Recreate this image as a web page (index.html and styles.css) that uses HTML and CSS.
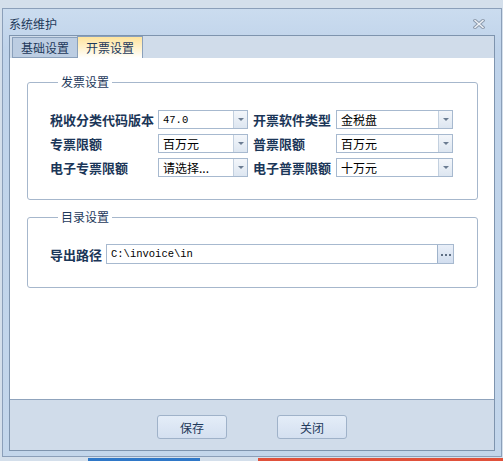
FILE: index.html
```html
<!DOCTYPE html>
<html lang="zh-CN">
<head>
  <meta charset="UTF-8" />
  <title>系统维护</title>
  <link rel="stylesheet" href="styles.css">
</head>
<body>
  <div class="window">
    <div class="titlebar">
      <span class="title">系统维护</span>
      <svg class="close" width="12" height="10" viewBox="0 0 12 10">
        <path d="M2 1.5 L10 8.5 M10 1.5 L2 8.5" stroke="#8d9bad" stroke-width="3.4" stroke-linecap="square" fill="none"/>
        <path d="M2 1.5 L10 8.5 M10 1.5 L2 8.5" stroke="#eef2f7" stroke-width="1.4" stroke-linecap="square" fill="none"/>
      </svg>
    </div>

    <div class="panel">
      <div class="tabs">
        <div class="tab">基础设置</div>
        <div class="tab active">开票设置</div>
      </div>

      <div class="content">
        <!-- 发票设置 -->
        <fieldset class="group">
          <legend>发票设置</legend>
          <div class="form-grid">
            <label>税收分类代码版本</label>
            <div class="combo mono"><span>47.0</span><i class="drop"></i></div>
            <label class="right">开票软件类型</label>
            <div class="combo"><span>金税盘</span><i class="drop"></i></div>

            <label>专票限额</label>
            <div class="combo"><span>百万元</span><i class="drop"></i></div>
            <label class="right">普票限额</label>
            <div class="combo"><span>百万元</span><i class="drop"></i></div>

            <label>电子专票限额</label>
            <div class="combo"><span>请选择...</span><i class="drop"></i></div>
            <label class="right">电子普票限额</label>
            <div class="combo"><span>十万元</span><i class="drop"></i></div>
          </div>
        </fieldset>

        <!-- 目录设置 -->
        <fieldset class="group dir">
          <legend>目录设置</legend>
          <div class="path-row">
            <label>导出路径</label>
            <div class="path-input mono">
              <span>C:\invoice\in</span>
              <i class="browse"><b></b><b></b><b></b></i>
            </div>
          </div>
        </fieldset>
      </div>

      <div class="footer">
        <button type="button">保存</button>
        <button type="button">关闭</button>
      </div>
    </div>
  </div>

  <div class="taskbar">
    <span class="bar blue"></span>
    <span class="bar red"></span>
  </div>
</body>
</html>
```

FILE: styles.css
```css
* {
  margin: 0;
  padding: 0;
  box-sizing: border-box;
  font-family: "Noto Sans CJK SC", "Noto Sans", sans-serif;
}

body {
  width: 503px;
  height: 461px;
  overflow: hidden;
  background: #d4dfeb;
  color: #1e395b;
  font-size: 12px;
}

.window {
  margin: 8px 0 0 2px;
  width: 500px;
  height: 449px;
  border: 1px solid #8b9fb9;
  background: linear-gradient(#cbdcef, #bfd3ea 40px, #c3d6eb);
}

.titlebar {
  height: 26px;
  display: flex;
  align-items: center;
  justify-content: space-between;
  padding: 2px 16px 0 6px;
}

.title {
  font-size: 12px;
  color: #1e395b;
}

.close {
  margin-top: 1px;
}

.panel {
  margin: 0 6px 5px 6px;
  height: 416px;
  border: 1px solid #7e94ae;
  background: #d0dcea;
  display: flex;
  flex-direction: column;
}

.tabs {
  height: 22px;
  display: flex;
  align-items: flex-end;
  padding-left: 2px;
}

.tab {
  width: 66px;
  height: 21px;
  border: 1px solid #8aa0bb;
  background: #bccde2;
  text-align: center;
  line-height: 19px;
  font-size: 12px;
  color: #1e395b;
}

.tab.active {
  height: 22px;
  margin-left: -1px;
  border-bottom: none;
  background: linear-gradient(#ffe49d, #fff3d2 12px, #fff);
  line-height: 21px;
}

.content {
  height: 342px;
  background: #fff;
  border-bottom: 1px solid #8fa3bc;
  padding: 0 16px 0 17px;
}

.group {
  border: 1px solid #a6b7cc;
  border-radius: 3px;
  margin-top: 17px;
  padding: 21px 0 22px 22px;
}

.group legend {
  margin-left: 8px;
  padding: 0 3px;
  font-size: 12px;
  line-height: 14px;
  color: #1e395b;
}

.group.dir {
  margin-top: 10px;
  padding: 20px 0 23px 22px;
}

.form-grid {
  display: grid;
  grid-template-columns: 108px 90px 88px 117px;
  grid-auto-rows: 19px;
  row-gap: 5px;
}

label {
  font-size: 13px;
  font-weight: bold;
  color: #1b3658;
  display: flex;
  align-items: center;
  white-space: nowrap;
}

label.right {
  padding-left: 5px;
}

.combo,
.path-input {
  border: 1px solid #a7b9cf;
  background: #fff;
  display: flex;
  align-items: center;
  color: #000;
  font-size: 12px;
}

.combo span,
.path-input span {
  flex: 1;
  padding-left: 4px;
  white-space: nowrap;
  overflow: hidden;
}

.mono span {
  font-family: "Liberation Mono", monospace;
  font-size: 10.5px;
}

.drop {
  width: 14px;
  height: 100%;
  border-left: 1px solid #c3d0df;
  background: linear-gradient(#f3f6fa, #dde6f1);
  position: relative;
}

.drop::after {
  content: "";
  position: absolute;
  left: 4px;
  top: 7px;
  border-left: 3px solid transparent;
  border-right: 3px solid transparent;
  border-top: 3px solid #6b7c92;
}

.path-row {
  display: grid;
  grid-template-columns: 56px 348px;
  height: 20px;
}

.browse {
  width: 16px;
  height: 100%;
  border-left: 1px solid #9fb3cb;
  background: linear-gradient(#e9eff8, #d2deef);
  display: flex;
  justify-content: center;
  align-items: center;
  gap: 2px;
  padding-top: 1px;
}

.browse b {
  width: 2px;
  height: 2px;
  background: #5f6f84;
}

.footer {
  flex: 1;
  display: flex;
  justify-content: center;
  gap: 50px;
  padding-top: 15px;
}

.footer button {
  width: 70px;
  height: 24px;
  border: 1px solid #9fb2c9;
  border-radius: 3px;
  background: linear-gradient(#e4edf8, #d4e0f0);
  font-size: 12px;
  color: #1e395b;
  cursor: pointer;
}

.taskbar {
  display: flex;
  margin-top: 1px;
  height: 3px;
}

.bar {
  display: block;
  height: 3px;
}

.bar.blue {
  margin-left: 88px;
  width: 112px;
  background: #2f78c8;
}

.bar.red {
  margin-left: 58px;
  width: 245px;
  background: #e0513b;
}
```
